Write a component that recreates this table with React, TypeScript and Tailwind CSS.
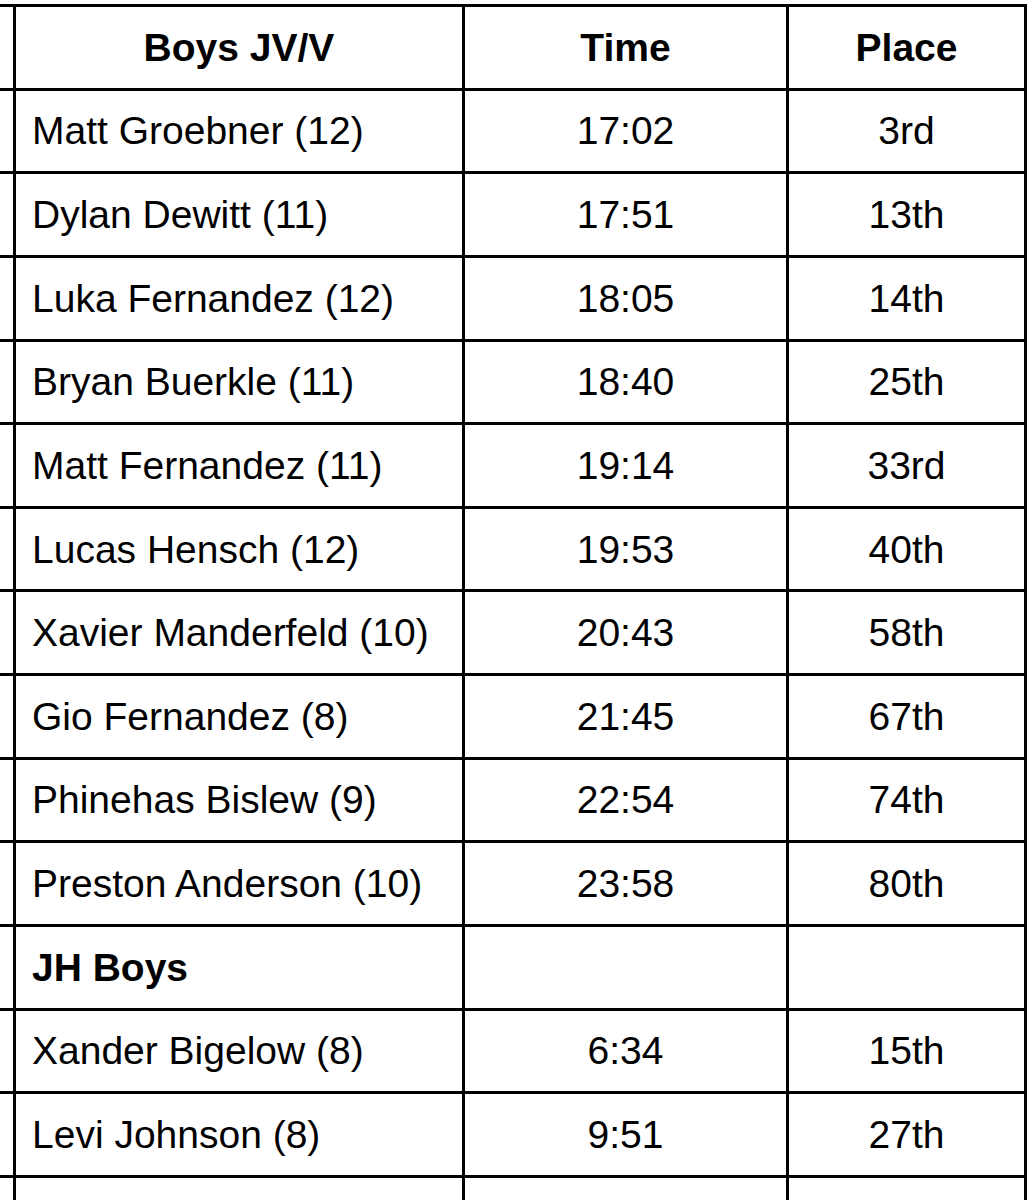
import React from "react";

const rows: [string, string, string][] = [
  ["Matt Groebner (12)", "17:02", "3rd"],
  ["Dylan Dewitt (11)", "17:51", "13th"],
  ["Luka Fernandez (12)", "18:05", "14th"],
  ["Bryan Buerkle (11)", "18:40", "25th"],
  ["Matt Fernandez (11)", "19:14", "33rd"],
  ["Lucas Hensch (12)", "19:53", "40th"],
  ["Xavier Manderfeld (10)", "20:43", "58th"],
  ["Gio Fernandez (8)", "21:45", "67th"],
  ["Phinehas Bislew (9)", "22:54", "74th"],
  ["Preston Anderson (10)", "23:58", "80th"],
];

const jh: [string, string, string][] = [
  ["Xander Bigelow (8)", "6:34", "15th"],
  ["Levi Johnson (8)", "9:51", "27th"],
];

const cell = "border-[3px] border-black align-middle p-0";

function Row({ r, bold }: { r: [string, string, string]; bold?: boolean }) {
  return (
    <tr className="h-[83.64px]">
      <td className={cell}></td>
      <td className={`${cell} pl-[16px] ${bold ? "font-bold" : ""}`}>{r[0]}</td>
      <td className={`${cell} text-center`}>{r[1]}</td>
      <td className={`${cell} text-center`}>{r[2]}</td>
    </tr>
  );
}

export default function App() {
  return (
    <div className="w-[1035px] h-[1200px] overflow-hidden bg-white text-black font-['Liberation_Sans',Arial,sans-serif] text-[39px] leading-none">
      <table className="border-collapse table-fixed ml-[-27px] mt-[4px] w-[1054px]">
        <colgroup>
          <col className="w-[40px]" />
          <col className="w-[449px]" />
          <col className="w-[324px]" />
          <col className="w-[238px]" />
        </colgroup>
        <tbody>
          <tr className="h-[83.64px]">
            <td className={cell}></td>
            <td className={`${cell} text-center font-bold`}>Boys JV/V</td>
            <td className={`${cell} text-center font-bold`}>Time</td>
            <td className={`${cell} text-center font-bold`}>Place</td>
          </tr>
          {rows.map((r) => (
            <Row key={r[0]} r={r} />
          ))}
          <Row r={["JH Boys", "", ""]} bold />
          {jh.map((r) => (
            <Row key={r[0]} r={r} />
          ))}
          <Row r={["", "", ""]} />
        </tbody>
      </table>
    </div>
  );
}
